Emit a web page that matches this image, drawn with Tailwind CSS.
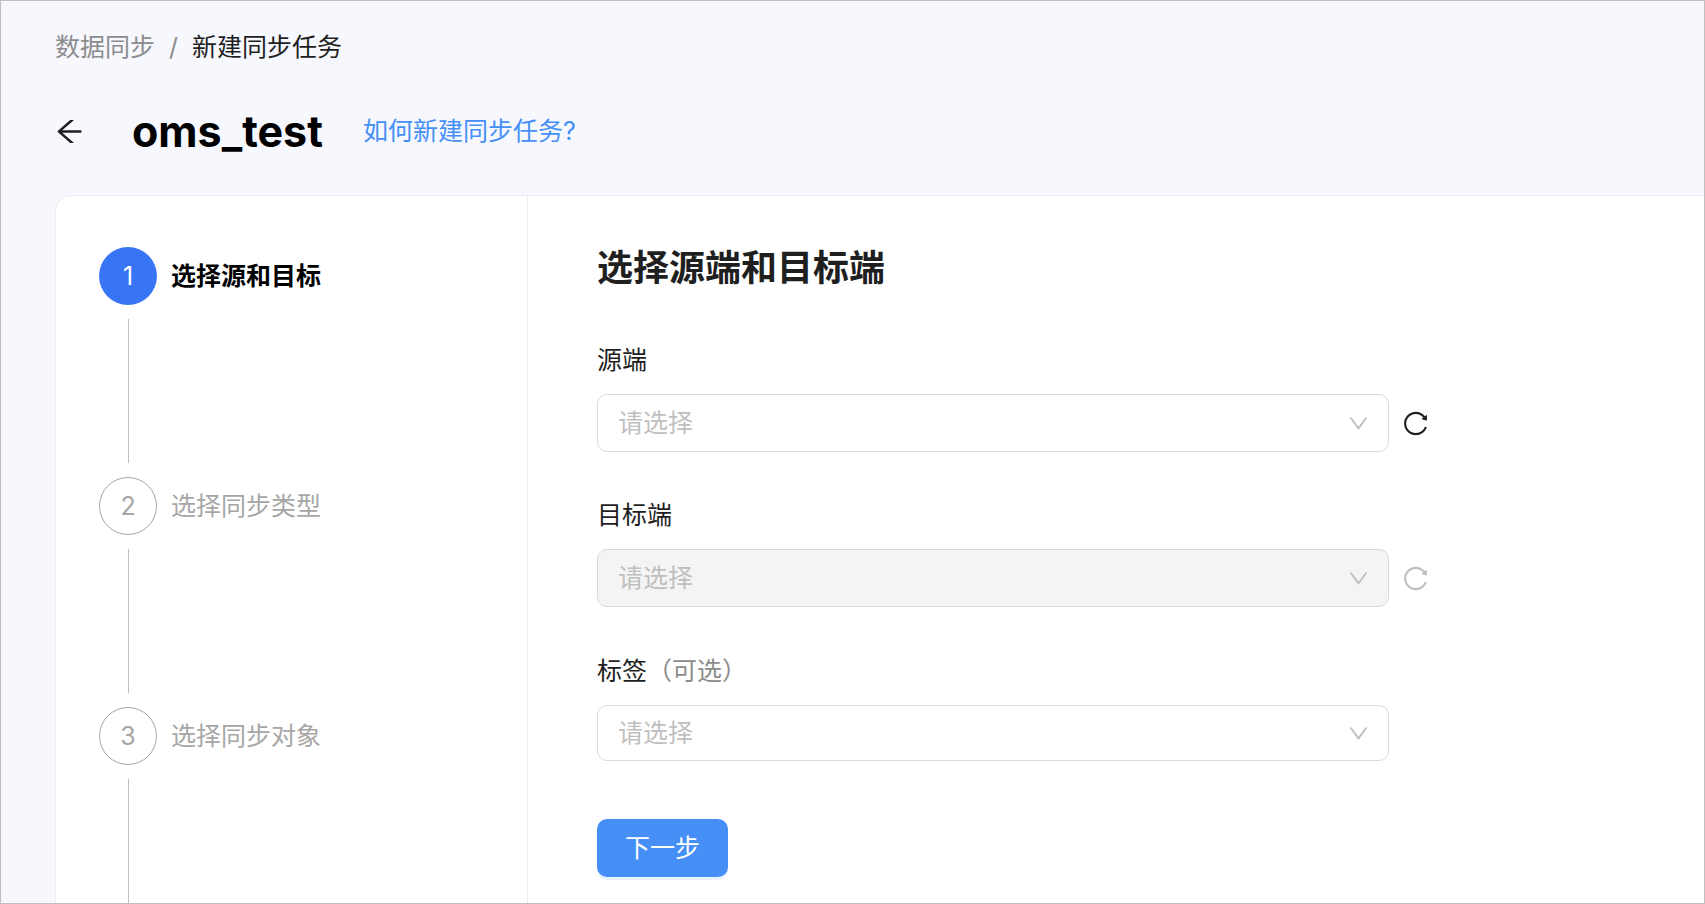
<!DOCTYPE html>
<html lang="zh-CN">
<head>
    <meta charset="UTF-8">
    <meta name="viewport" content="width=device-width, initial-scale=1.0">
    <title>新建同步任务</title>
    <script src="https://cdn.jsdelivr.net/npm/@tailwindcss/browser@4"></script>
</head>
<body class="min-h-screen flex flex-col border border-[#bfbfbf] bg-[#f6f8fe] pl-[54px] font-[Inter,'Noto_Sans_CJK_SC',sans-serif] text-[25px] leading-8 text-[#1f1f1f]">
    <!-- Icons -->
    <svg class="hidden" aria-hidden="true">
        <symbol id="icon-back" viewBox="64 64 896 896">
            <path d="M872 474H286.9l350.2-304c5.6-4.9 2.2-14-5.2-14h-88.5c-3.9 0-7.6 1.4-10.5 3.9L155 487.8a31.96 31.96 0 000 48.3L535.1 866c1.5 1.3 3.3 2 5.2 2h91.5c7.4 0 10.8-9.2 5.2-14L286.9 550H872c4.4 0 8-3.6 8-8v-60c0-4.4-3.6-8-8-8z"/>
        </symbol>
        <symbol id="icon-down" viewBox="64 64 896 896">
            <path d="M884 256h-75c-5.1 0-9.9 2.5-12.9 6.6L512 654.2 227.9 262.6c-3-4.1-7.8-6.6-12.9-6.6h-75c-6.5 0-10.3 7.4-6.5 12.7l352.6 486.1c12.8 17.6 39 17.6 51.7 0l352.6-486.1c3.9-5.3.1-12.7-6.4-12.7z"/>
        </symbol>
        <symbol id="icon-reload" viewBox="64 64 896 896">
            <path d="M909.1 209.3l-56.4 44.1C775.8 155.1 656.2 92 521.9 92 290 92 102.3 279.5 102 511.5 101.7 743.7 289.8 932 521.9 932c181.3 0 335.8-115 394.6-276.1 1.5-4.2-.7-8.9-4.9-10.3l-56.7-19.5a8 8 0 00-10.1 4.8c-1.8 5-3.8 10-5.9 14.9-17.3 41-42.1 77.8-73.7 109.4A344.77 344.77 0 01655.9 829c-42.3 17.9-87.4 27-133.8 27-46.5 0-91.5-9.1-133.8-27A341.5 341.5 0 01279 755.2a342.16 342.16 0 01-73.7-109.4c-17.9-42.4-27-87.4-27-133.9s9.1-91.5 27-133.9c17.3-41 42.1-77.8 73.7-109.4 31.6-31.6 68.4-56.4 109.3-73.8 42.3-17.9 87.4-27 133.8-27 46.5 0 91.5 9.1 133.8 27a341.5 341.5 0 01109.3 73.8c9.9 9.9 19.2 20.4 27.8 31.4l-60.2 47a8 8 0 003 14.1l175.6 43c5 1.2 9.9-2.6 9.9-7.7l.8-180.9c-.1-6.6-7.8-10.3-13-6.2z"/>
        </symbol>
    </svg>

    <!-- Header -->
    <header>
        <nav class="flex gap-[14px] pt-[30px]" aria-label="面包屑">
            <a href="#" class="text-[#8c8c8c]">数据同步</a>
            <span class="text-[#8c8c8c]">/</span>
            <span>新建同步任务</span>
        </nav>
        <div class="mt-11 flex h-12 items-center">
            <button type="button" aria-label="返回">
                <svg class="size-[29px] fill-current"><use href="#icon-back"/></svg>
            </button>
            <h1 class="ml-12 text-[43px] leading-12 font-bold text-black">oms_test</h1>
            <a href="#" class="ml-10 text-[#458ff7]">如何新建同步任务?</a>
        </div>
    </header>

    <!-- Main Content -->
    <main class="mt-10 flex grow rounded-tl-2xl border-t border-l border-[#eeeeef] bg-white">
        <!-- Steps -->
        <aside class="flex w-[472px] shrink-0 flex-col border-r border-[#eeeeef] pt-[51px] pl-[43px]">
            <ol class="flex grow flex-col gap-[14px] text-[#a6a6a6]">
                <li class="flex flex-col gap-[14px]">
                    <div class="flex items-center gap-[14px]">
                        <span class="flex size-[58px] items-center justify-center rounded-full bg-[#3875f6] text-white">1</span>
                        <span class="font-bold text-black">选择源和目标</span>
                    </div>
                    <div class="ml-[29px] h-36 w-px bg-[#bfbfbf]"></div>
                </li>
                <li class="flex flex-col gap-[14px]">
                    <div class="flex items-center gap-[14px]">
                        <span class="flex size-[58px] items-center justify-center rounded-full border border-[#a6a6a6]">2</span>
                        <span>选择同步类型</span>
                    </div>
                    <div class="ml-[29px] h-36 w-px bg-[#bfbfbf]"></div>
                </li>
                <li class="flex grow flex-col gap-[14px]">
                    <div class="flex items-center gap-[14px]">
                        <span class="flex size-[58px] items-center justify-center rounded-full border border-[#a6a6a6]">3</span>
                        <span>选择同步对象</span>
                    </div>
                    <div class="ml-[29px] w-px grow bg-[#bfbfbf]"></div>
                </li>
            </ol>
        </aside>

        <!-- Form -->
        <form class="min-w-0 grow px-[69px] pt-12">
            <h2 class="text-4xl leading-12 font-bold">选择源端和目标端</h2>

            <div class="mt-[52px]">
                <label for="source" class="block">源端</label>
                <div class="mt-[18px] flex items-center gap-[14px]">
                    <div class="relative w-full max-w-[792px]">
                        <select id="source" class="h-[58px] w-full appearance-none rounded-[10px] border border-[#d9d9d9] bg-white px-5 text-[#bfbfbf]">
                            <option>请选择</option>
                        </select>
                        <svg class="pointer-events-none absolute inset-y-0 right-5 my-auto size-[21px] fill-[#bfbfbf]"><use href="#icon-down"/></svg>
                    </div>
                    <button type="button" aria-label="刷新源端">
                        <svg class="size-[25px] fill-current"><use href="#icon-reload"/></svg>
                    </button>
                </div>
            </div>

            <div class="mt-[47px]">
                <label for="target" class="block">目标端</label>
                <div class="mt-[18px] flex items-center gap-[14px]">
                    <div class="relative w-full max-w-[792px]">
                        <select id="target" disabled class="h-[58px] w-full appearance-none rounded-[10px] border border-[#d9d9d9] bg-[#f4f4f4] px-5 text-[#bfbfbf] opacity-100">
                            <option>请选择</option>
                        </select>
                        <svg class="pointer-events-none absolute inset-y-0 right-5 my-auto size-[21px] fill-[#bfbfbf]"><use href="#icon-down"/></svg>
                    </div>
                    <button type="button" disabled aria-label="刷新目标端" class="text-[#bfbfbf]">
                        <svg class="size-[25px] fill-current"><use href="#icon-reload"/></svg>
                    </button>
                </div>
            </div>

            <div class="mt-12">
                <label for="tags" class="block">标签<span class="text-[#8c8c8c]">（可选）</span></label>
                <div class="relative mt-[18px] max-w-[792px]">
                    <select id="tags" class="h-14 w-full appearance-none rounded-[10px] border border-[#d9d9d9] bg-white px-5 text-[#bfbfbf]">
                        <option>请选择</option>
                    </select>
                    <svg class="pointer-events-none absolute inset-y-0 right-5 my-auto size-[21px] fill-[#bfbfbf]"><use href="#icon-down"/></svg>
                </div>
            </div>

            <button type="submit" class="mt-[58px] mb-[25px] h-[58px] rounded-[10px] bg-[#458ff7] px-7 text-white shadow-[0_3px_0_#e9f3fe]">下一步</button>
        </form>
    </main>
</body>
</html>
